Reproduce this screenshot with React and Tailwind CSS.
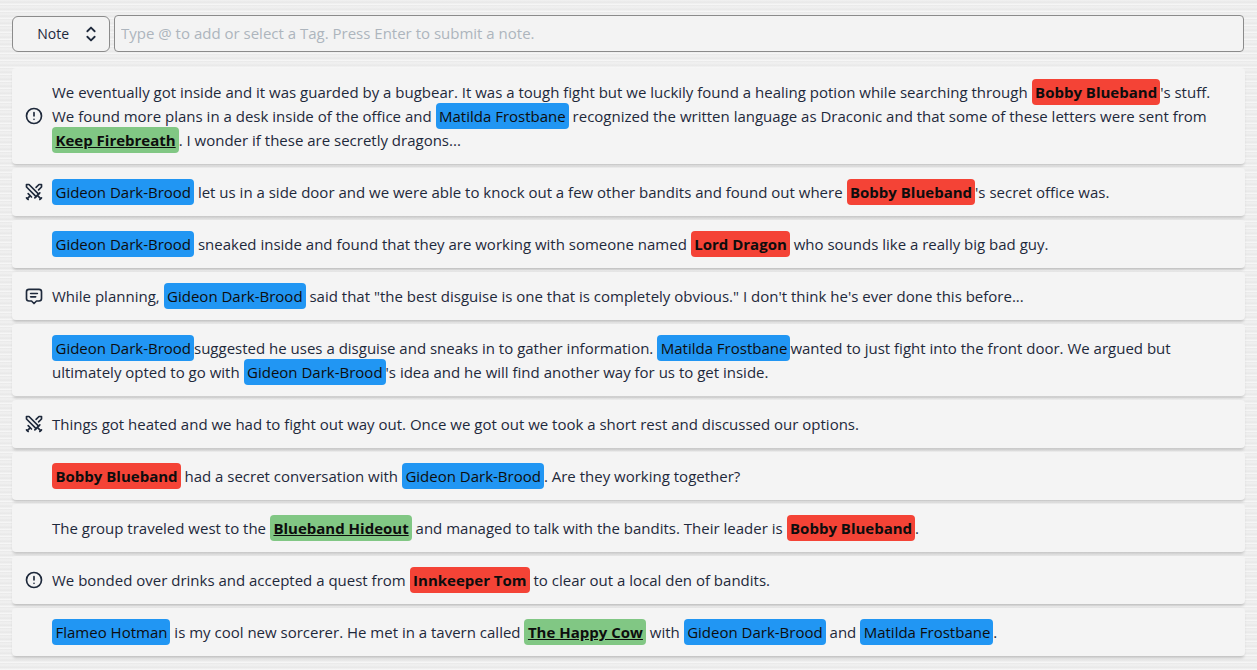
import { Swords } from "lucide-react";
import { TbAlertCircle, TbMessage2, TbSelector } from "react-icons/tb";

const BLUE = "blue";
const RED = "red";
const GREEN = "green";

function Tag({ kind, children }) {
  if (kind === GREEN) {
    return (
      <span className="whitespace-nowrap rounded bg-[#81c784] py-[3px] pl-[3.5px] pr-[3px] font-bold text-[#0d0d0d] underline">
        {children}
      </span>
    );
  }
  if (kind === RED) {
    return (
      <span className="whitespace-nowrap rounded bg-[#f44336] py-[3px] pl-[3.5px] pr-[3px] font-bold text-[#0d0d0d]">
        {children}
      </span>
    );
  }
  return (
    <span className="whitespace-nowrap rounded bg-[#2196f3] py-[3px] pl-[3.5px] pr-[3px] text-[#0d0d0d]">
      {children}
    </span>
  );
}

const gideon = <Tag kind={BLUE}>Gideon Dark-Brood</Tag>;
const matilda = <Tag kind={BLUE}>Matilda Frostbane</Tag>;
const bobby = <Tag kind={RED}>Bobby Blueband</Tag>;

function Row({ icon: Icon, children }) {
  return (
    <div className="flex items-center rounded-sm bg-[#f4f4f4] p-3 shadow-[0_3px_3px_-1px_rgba(0,0,0,0.18)]">
      <div className="w-[28px] shrink-0">
        {Icon && <Icon size={20} className="text-[#1e293b]" />}
      </div>
      <div className="min-h-6 leading-6">{children}</div>
    </div>
  );
}

export default function App() {
  return (
    <div className="h-[670px] overflow-hidden bg-[#eeeeee] bg-[repeating-linear-gradient(0deg,rgba(255,255,255,0.45)_0px,rgba(255,255,255,0.45)_1px,rgba(0,0,0,0.02)_2px,rgba(0,0,0,0.02)_3px,rgba(255,255,255,0.2)_5px,rgba(0,0,0,0.025)_7px)] px-3 pt-[15px] font-['Open_Sans',sans-serif] text-[15px] text-[#1e293b]">
      <div className="flex items-center gap-1 pr-[1px]">
        <div className="flex h-[36px] w-[98px] items-center justify-end gap-[11px] rounded-md border border-[#8b8b8b] bg-[#f3f3f3] pr-[7px] text-[14px]">
          <span>Note</span>
          <TbSelector size={22} />
        </div>
        <input
          className="h-[37px] flex-1 rounded border border-[#8b8b8b] bg-[#f3f3f3] px-[6px] pb-[2px] text-[15px] outline-none placeholder:text-[#adb5bd]"
          placeholder="Type @ to add or select a Tag. Press Enter to submit a note."
        />
      </div>

      <div className="mt-[16px] flex flex-col gap-1">
        <Row icon={TbAlertCircle}>
          We eventually got inside and it was guarded by a bugbear. It was a tough fight but we luckily found a healing potion while searching through {bobby}'s stuff. We found more plans in a desk inside of the office and {matilda} recognized the written language as Draconic and that some of these letters were sent from <Tag kind={GREEN}>Keep Firebreath</Tag>. I wonder if these are secretly dragons...
        </Row>
        <Row icon={Swords}>
          {gideon} let us in a side door and we were able to knock out a few other bandits and found out where {bobby}'s secret office was.
        </Row>
        <Row>
          {gideon} sneaked inside and found that they are working with someone named <Tag kind={RED}>Lord Dragon</Tag> who sounds like a really big bad guy.
        </Row>
        <Row icon={TbMessage2}>
          While planning, {gideon} said that "the best disguise is one that is completely obvious." I don't think he's ever done this before...
        </Row>
        <Row>
          {gideon}suggested he uses a disguise and sneaks in to gather information. {matilda}wanted to just fight into the front door. We argued but ultimately opted to go with {gideon}'s idea and he will find another way for us to get inside.
        </Row>
        <Row icon={Swords}>
          Things got heated and we had to fight out way out. Once we got out we took a short rest and discussed our options.
        </Row>
        <Row>
          {bobby} had a secret conversation with {gideon}. Are they working together?
        </Row>
        <Row>
          The group traveled west to the <Tag kind={GREEN}>Blueband Hideout</Tag> and managed to talk with the bandits. Their leader is {bobby}.
        </Row>
        <Row icon={TbAlertCircle}>
          We bonded over drinks and accepted a quest from <Tag kind={RED}>Innkeeper Tom</Tag> to clear out a local den of bandits.
        </Row>
        <Row>
          <Tag kind={BLUE}>Flameo Hotman</Tag> is my cool new sorcerer. He met in a tavern called <Tag kind={GREEN}>The Happy Cow</Tag> with {gideon} and {matilda}.
        </Row>
      </div>
    </div>
  );
}
